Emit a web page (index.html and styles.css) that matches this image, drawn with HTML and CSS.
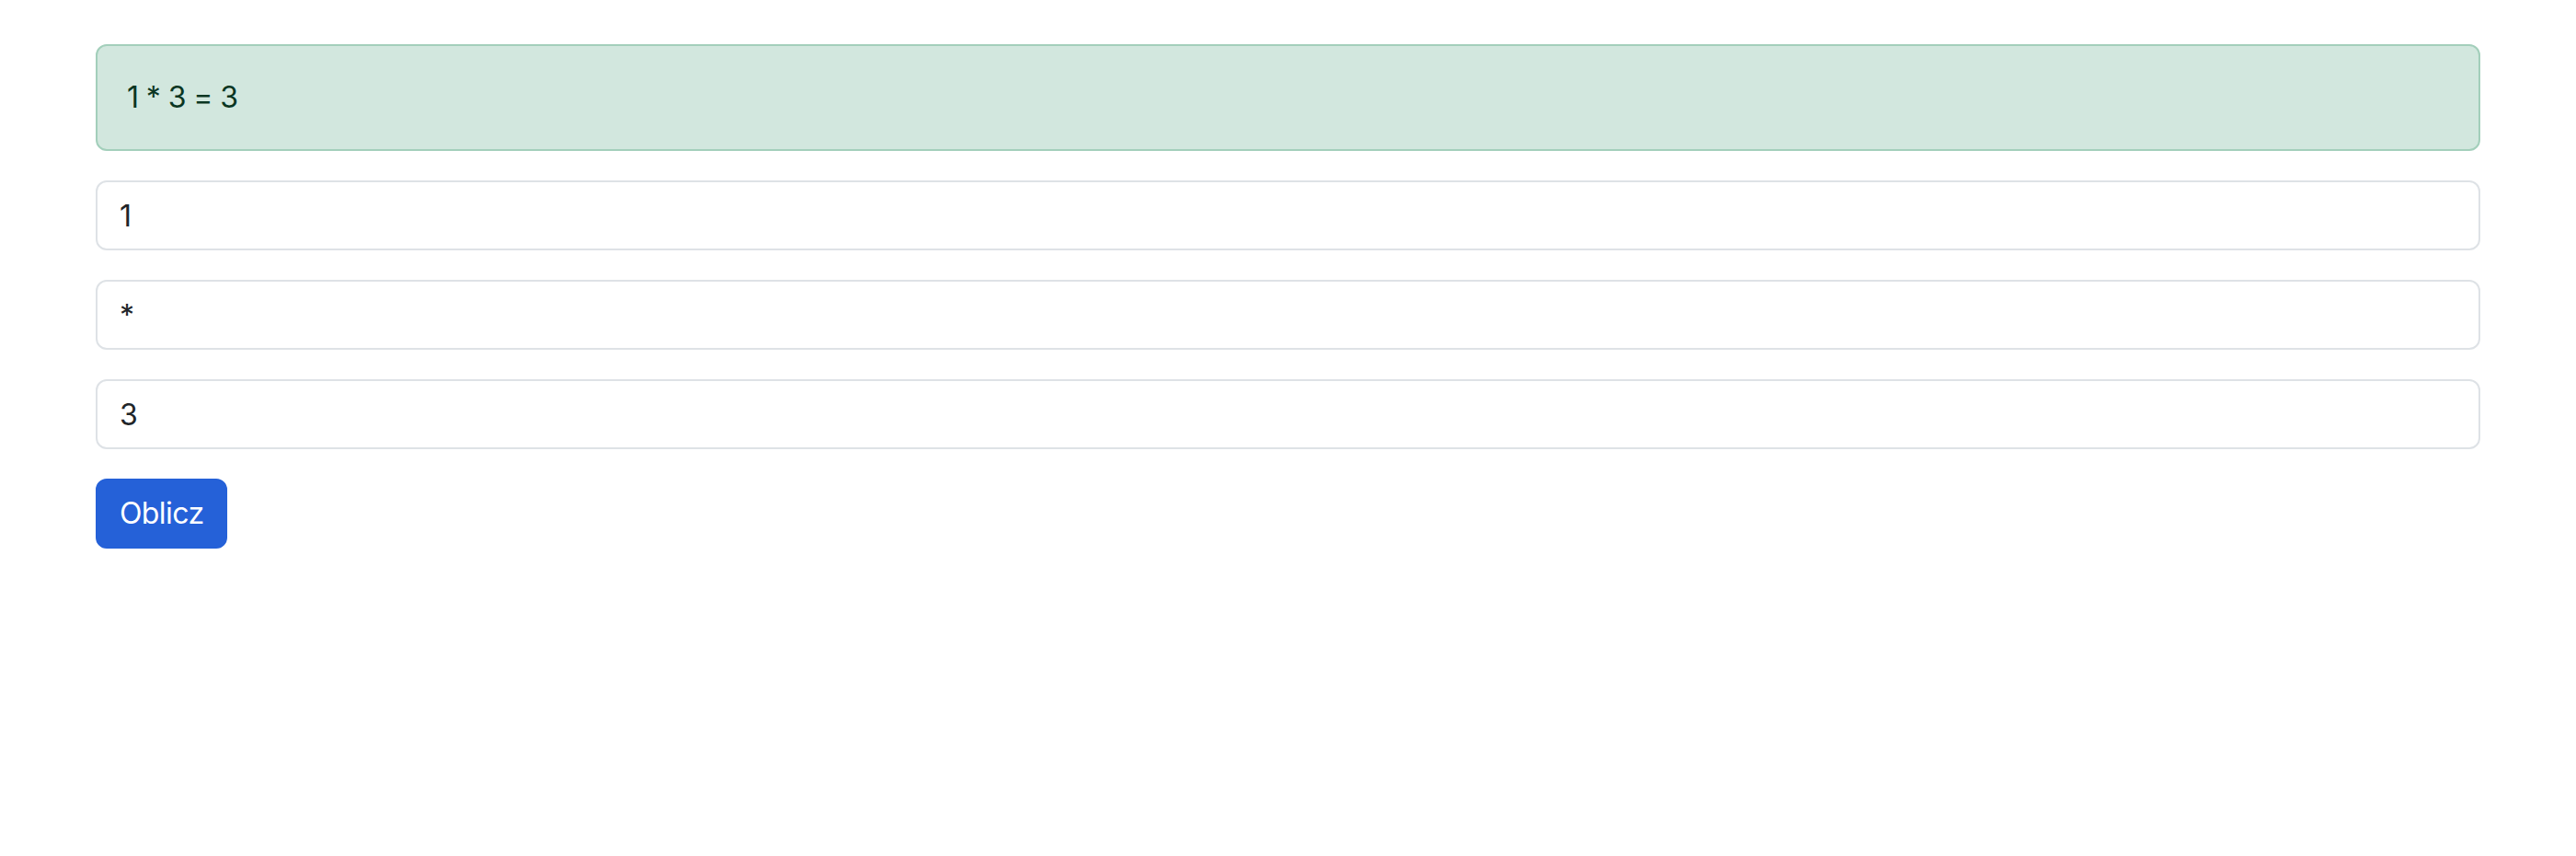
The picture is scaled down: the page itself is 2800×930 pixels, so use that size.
FILE: index.html
```html
<!DOCTYPE html>
<html lang="pl">
<head>
<meta charset="utf-8">
<title>Kalkulator</title>
<link rel="stylesheet" href="styles.css">
</head>
<body>
<div class="container">
  <div class="alert">1 * 3 = 3</div>
  <form class="calc">
    <input class="field" type="text" value="1">
    <input class="field" type="text" value="*">
    <input class="field" type="text" value="3">
    <div><button class="btn" type="button">Oblicz</button></div>
  </form>
</div>
</body>
</html>
```
FILE: styles.css
```css
* { box-sizing: border-box; }
html, body {
  margin: 0;
  background: #ffffff;
  font-family: Inter, "Noto Sans", "Liberation Sans", sans-serif;
  font-feature-settings: "calt" 0;
  letter-spacing: -0.6px;
  color: #212529;
}
.container {
  width: 2640px;
  margin: 48px auto 0;
  padding: 0 24px;
}
.alert {
  background: #d2e7de;
  border: 2px solid #a3cfbb;
  border-radius: 12px;
  color: #0a3622;
  padding: 32px;
  font-size: 32px;
  line-height: 48px;
  margin-bottom: 32px;
}
.calc {
  display: flex;
  flex-direction: column;
  gap: 32px;
  margin: 0;
}
.field {
  display: block;
  width: 100%;
  height: 76px;
  padding: 12px 24px;
  font-family: inherit;
  font-feature-settings: inherit;
  letter-spacing: inherit;
  font-size: 32px;
  line-height: 48px;
  color: #212529;
  background: #ffffff;
  border: 2px solid #dee2e6;
  border-radius: 12px;
  outline: none;
}
.btn {
  display: inline-block;
  height: 76px;
  padding: 12px 24px;
  font-family: inherit;
  font-feature-settings: inherit;
  letter-spacing: inherit;
  font-size: 32px;
  line-height: 48px;
  color: #ffffff;
  background: #2561d8;
  border: 2px solid #2561d8;
  border-radius: 12px;
  cursor: pointer;
}
```
